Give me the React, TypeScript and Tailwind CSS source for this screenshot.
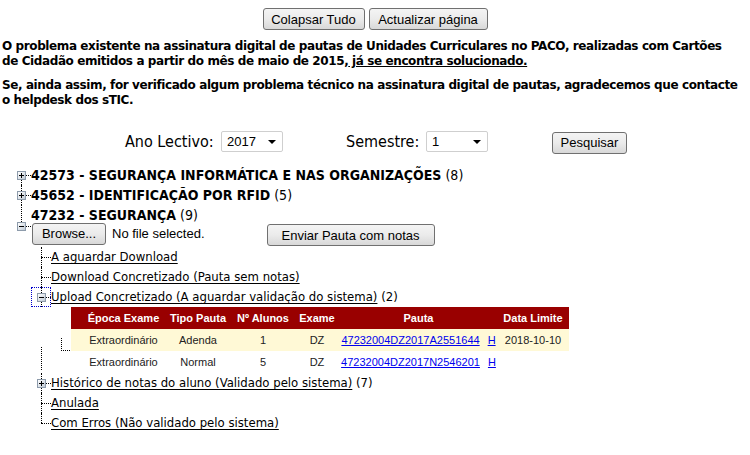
import React from "react";

const TAHOMA = "font-['Tahoma','Liberation_Sans',sans-serif]";
const VERDANA = "font-['Verdana','DejaVu_Sans',sans-serif]";
const COMIC = "font-['Comic_Sans_MS','DejaVu_Sans_Condensed','DejaVu_Sans',sans-serif]";

function Btn({ w, children }: { w: string; children: React.ReactNode }) {
  return (
    <button
      className={`${w} h-[22px] shrink-0 border border-[#707070] rounded-[3px] bg-linear-to-b from-[#f4f4f4] via-[#ebebeb] to-[#d8d8d8] text-[13px] text-black ${TAHOMA} leading-none`}
    >
      {children}
    </button>
  );
}

function Sel({ value }: { value: string }) {
  return (
    <div className={`w-[62px] h-[21px] shrink-0 border border-[#cfcfcf] rounded-[2px] bg-white flex items-center justify-between pl-[5px] pr-[6px] text-[13px] ${TAHOMA}`}>
      <span>{value}</span>
      <svg width="8" height="4" viewBox="0 0 8 4">
        <path d="M0 0h8L4 4z" fill="#000" />
      </svg>
    </div>
  );
}

function Box({ plus }: { plus?: boolean }) {
  return (
    <div className="w-[9px] h-[9px] shrink-0 border border-[#8d9bab] bg-linear-to-br from-white to-[#c0cad5] flex items-center justify-center">
      <svg width="5" height="5" viewBox="0 0 5 5">
        <path d="M0 2.5h5" stroke="#000" strokeWidth="1" />
        {plus && <path d="M2.5 0v5" stroke="#000" strokeWidth="1" />}
      </svg>
    </div>
  );
}

// one 20px tree connector cell
function Conn({
  up,
  down,
  box,
  focus,
}: {
  up?: boolean;
  down?: boolean;
  box?: "plus" | "minus";
  focus?: boolean;
}) {
  return (
    <div
      className={`w-[20px] shrink-0 flex flex-col ${focus ? "outline outline-1 outline-dotted outline-[#0000cc] -outline-offset-1" : ""}`}
    >
      <div className={`flex-1 ml-[10px] ${up ? "border-l border-dotted border-black" : ""}`} />
      {box ? (
        <div className="h-[9px] flex items-center">
          <div className="ml-[6px]">
            <Box plus={box === "plus"} />
          </div>
          <div className="flex-1 h-0 border-t border-dotted border-black" />
        </div>
      ) : (
        <div className="h-px flex">
          <div className="ml-[10px] flex-1 border-t border-dotted border-black" />
        </div>
      )}
      <div className={`flex-1 ml-[10px] ${down ? "border-l border-dotted border-black" : ""}`} />
    </div>
  );
}

const Empty = () => <div className="w-[20px] shrink-0" />;

function LinkItem({ children, extra }: { children: React.ReactNode; extra?: string }) {
  return (
    <div className={`flex items-center text-[13px] ${COMIC} whitespace-nowrap`}>
      <span className="underline underline-offset-2 text-black">{children}</span>
      {extra && <span>&nbsp;{extra}</span>}
    </div>
  );
}

const rows = [
  { epoca: "Extraordinário", tipo: "Adenda", n: "1", exame: "DZ", pauta: "47232004DZ2017A2551644", limite: "2018-10-10", bg: "bg-[#fff9d6]" },
  { epoca: "Extraordinário", tipo: "Normal", n: "5", exame: "DZ", pauta: "47232004DZ2017N2546201", limite: "", bg: "bg-white" },
];

export default function App() {
  return (
    <div className="w-[750px] h-[455px] bg-white overflow-hidden text-black">
      {/* top buttons */}
      <div className="flex justify-center gap-[4px] pt-[8px]">
        <Btn w="w-[102px]">Colapsar Tudo</Btn>
        <Btn w="w-[119px]">Actualizar página</Btn>
      </div>

      {/* notice */}
      <div className={`px-[2px] mt-[9px] text-[12px] leading-[15px] font-bold tracking-[-0.4px] ${VERDANA} whitespace-nowrap`}>
        <p>
          O problema existente na assinatura digital de pautas de Unidades Curriculares no PACO, realizadas com Cartões
          <br />
          de Cidadão emitidos a partir do mês de maio de 2015,<span className="underline"> já se encontra solucionado.</span>
        </p>
        <p className="mt-[9px]">
          Se, ainda assim, for verificado algum problema técnico na assinatura digital de pautas, agradecemos que contacte
          <br />o helpdesk dos sTIC.
        </p>
      </div>

      {/* search */}
      <div className="flex items-center h-[21px] mt-[23px] pl-[125px]">
        <div className={`w-[96px] shrink-0 text-[16px] ${COMIC} whitespace-nowrap`}>Ano Lectivo:</div>
        <Sel value="2017" />
        <div className={`w-[80px] ml-[63px] shrink-0 text-[16px] ${COMIC} whitespace-nowrap`}>Semestre:</div>
        <Sel value="1" />
        <div className="ml-[64px]">
          <Btn w="w-[75px]">Pesquisar</Btn>
        </div>
      </div>

      {/* tree */}
      <div className="mt-[13px] pl-[11px]">
        <div className="flex h-[20px]">
          <Conn down box="plus" />
          <div className={`flex items-center text-[14px] ${COMIC} whitespace-nowrap`}>
            <b>42573 - SEGURANÇA INFORMÁTICA E NAS ORGANIZAÇÕES</b>&nbsp;(8)
          </div>
        </div>
        <div className="flex h-[20px]">
          <Conn up down box="plus" />
          <div className={`flex items-center text-[14px] ${COMIC} whitespace-nowrap`}>
            <b>45652 - IDENTIFICAÇÃO POR RFID</b>&nbsp;(5)
          </div>
        </div>
        <div className="flex h-[42px]">
          <Conn up box="minus" />
          <div className="flex flex-col">
            <div className={`h-[20px] flex items-center text-[14px] ${COMIC} whitespace-nowrap`}>
              <b>47232 - SEGURANÇA</b>&nbsp;(9)
            </div>
            <div className="h-[22px] flex items-end">
              <div className="flex items-center mb-px ml-px">
                <Btn w="w-[74px]">Browse...</Btn>
                <span className={`ml-[6px] text-[13px] ${TAHOMA} whitespace-nowrap`}>No file selected.</span>
                <div className="ml-[62px]">
                  <Btn w="w-[168px]">Enviar Pauta com notas</Btn>
                </div>
              </div>
            </div>
          </div>
        </div>

        {/* children of 47232 */}
        <div className="flex h-[20px]">
          <Empty />
          <Conn up down />
          <LinkItem>A aguardar Download</LinkItem>
        </div>
        <div className="flex h-[20px]">
          <Empty />
          <Conn up down />
          <LinkItem>Download Concretizado (Pauta sem notas)</LinkItem>
        </div>
        <div className="flex h-[20px]">
          <Empty />
          <Conn up down box="minus" focus />
          <LinkItem extra="(2)">Upload Concretizado (A aguardar validação do sistema)</LinkItem>
        </div>
        <div className="flex h-[66px]">
          <Empty />
          <div className="w-[20px] shrink-0">
            <svg width="20" height="66" viewBox="0 0 20 66">
              <path d="M10.5 40v23" stroke="#000" strokeDasharray="1 1" />
            </svg>
          </div>
          <div className="w-[20px] shrink-0">
            <svg width="20" height="66" viewBox="0 0 20 66">
              <path d="M10.5 31v12M10 43.5h10" stroke="#000" strokeDasharray="1 1" />
            </svg>
          </div>
          <table className={`w-[498px] table-fixed border-collapse text-[11px] ${TAHOMA}`}>
            <colgroup>
              <col className="w-[12px]" />
              <col className="w-[81px]" />
              <col className="w-[68px]" />
              <col className="w-[62px]" />
              <col className="w-[46px]" />
              <col className="w-[157px]" />
              <col className="w-[72px]" />
            </colgroup>
            <thead>
              <tr className="h-[22px] bg-[#990000] text-white font-bold">
                <th></th>
                <th className="text-center whitespace-nowrap">Época Exame</th>
                <th className="text-center whitespace-nowrap">Tipo Pauta</th>
                <th className="text-center whitespace-nowrap">Nº Alunos</th>
                <th className="text-center whitespace-nowrap">Exame</th>
                <th className="text-center whitespace-nowrap">Pauta</th>
                <th className="text-center whitespace-nowrap">Data Limite</th>
              </tr>
            </thead>
            <tbody>
              {rows.map((r) => (
                <tr key={r.pauta} className={`h-[22px] ${r.bg} text-[#222]`}>
                  <td></td>
                  <td className="text-center whitespace-nowrap">{r.epoca}</td>
                  <td className="text-center whitespace-nowrap">{r.tipo}</td>
                  <td className="text-center">{r.n}</td>
                  <td className="text-center">{r.exame}</td>
                  <td className="text-center whitespace-nowrap">
                    <a className="text-[#0000ee] underline">{r.pauta}</a>
                    <span className="inline-block w-[8px]" />
                    <a className="text-[#0000ee] underline">H</a>
                  </td>
                  <td className="text-center whitespace-nowrap">{r.limite}</td>
                </tr>
              ))}
            </tbody>
          </table>
        </div>
        <div className="flex h-[20px]">
          <Empty />
          <Conn up down box="plus" />
          <LinkItem extra="(7)">Histórico de notas do aluno (Validado pelo sistema)</LinkItem>
        </div>
        <div className="flex h-[20px]">
          <Empty />
          <Conn up down />
          <LinkItem>Anulada</LinkItem>
        </div>
        <div className="flex h-[20px]">
          <Empty />
          <Conn up />
          <LinkItem>Com Erros (Não validado pelo sistema)</LinkItem>
        </div>
      </div>
    </div>
  );
}
